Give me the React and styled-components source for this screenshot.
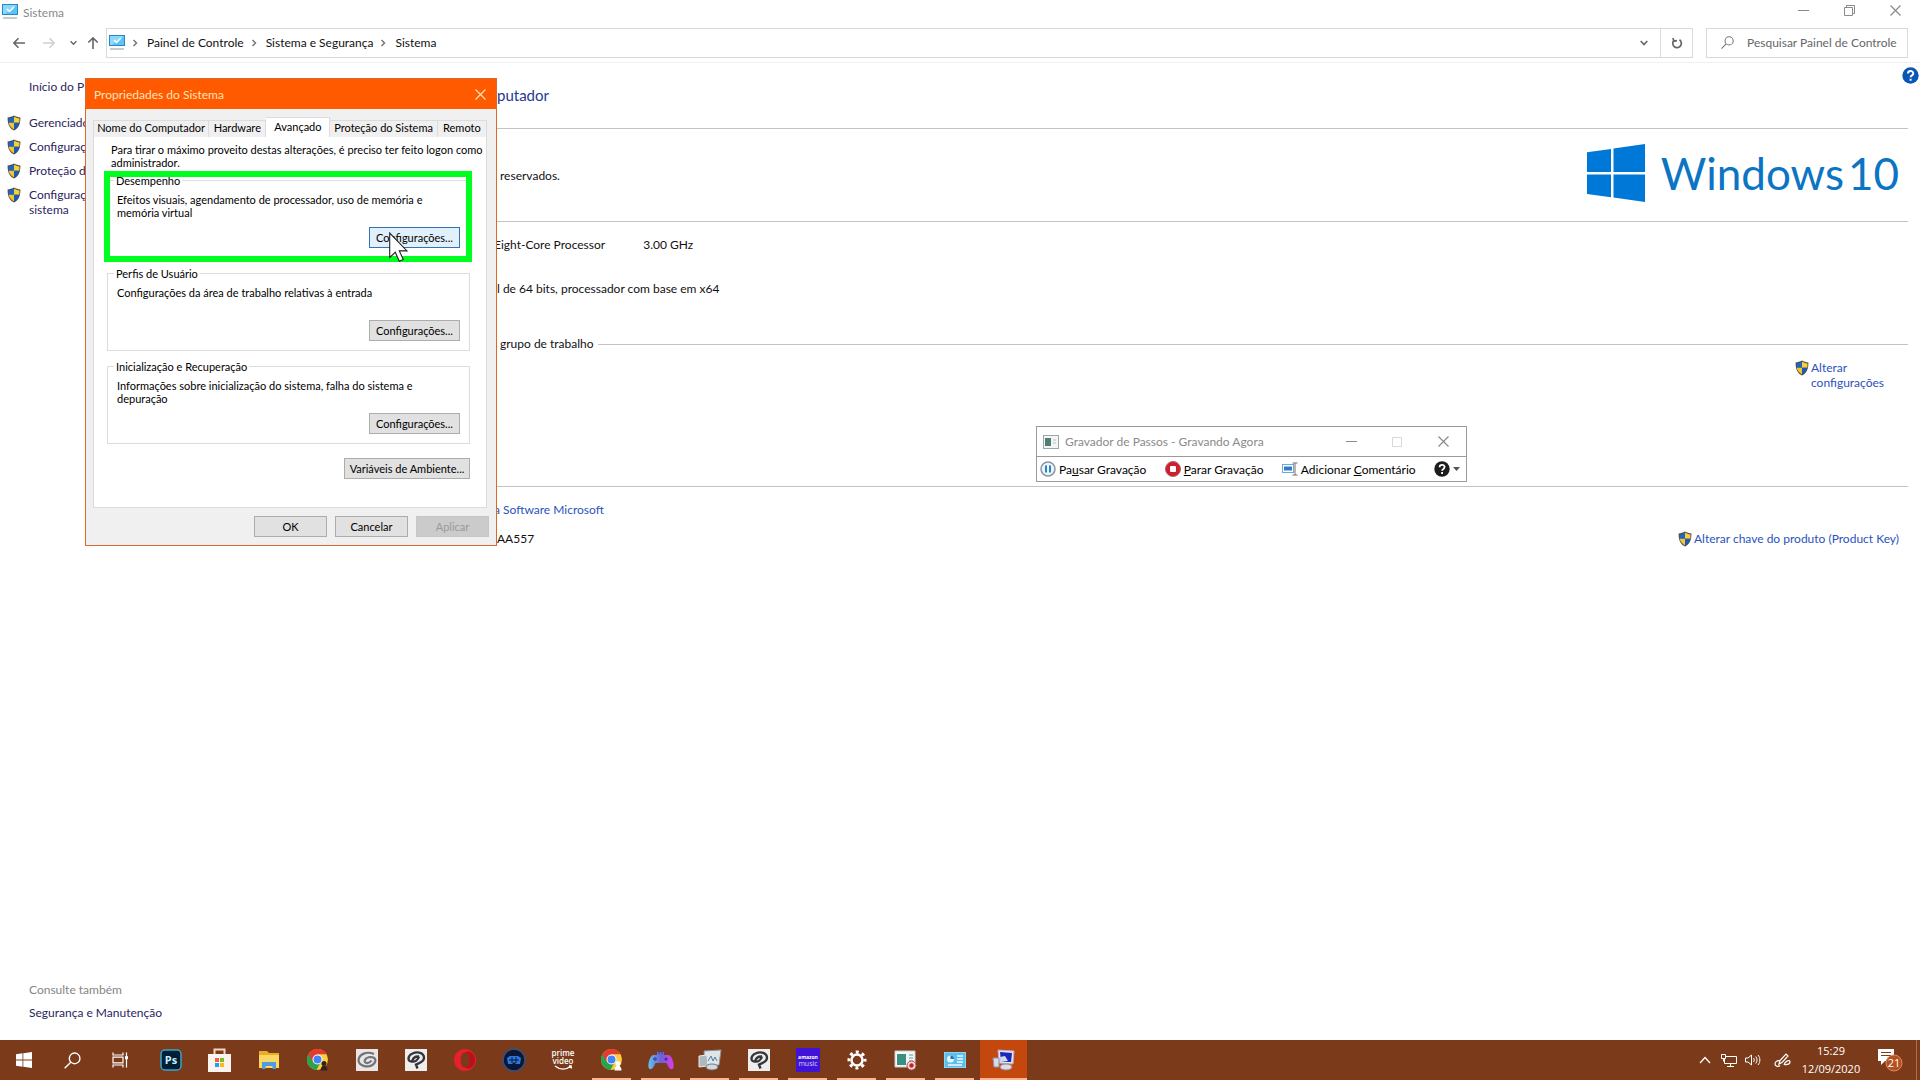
import React from 'react'
import styled, { createGlobalStyle } from 'styled-components'

const GlobalStyle = createGlobalStyle`
    * {
        box-sizing: border-box;
    }
    body {
        margin: 0;
        background: #fff;
        color: #111;
        font-family: Lato, 'Open Sans', sans-serif;
        font-size: 12px;
        line-height: 15px;
    }
    button, input {
        font-family: inherit;
        font-size: inherit;
        line-height: inherit;
        color: inherit;
        margin: 0;
    }
    a {
        color: inherit;
        text-decoration: none;
    }
    svg {
        display: block;
        flex: none;
    }
`

const Screen = styled.div`
    position: relative;
    display: flex;
    flex-direction: column;
    min-height: 100vh;
    overflow: hidden;
`

const PlainButton = styled.button`
    display: flex;
    align-items: center;
    justify-content: center;
    padding: 0;
    border: 0;
    background: none;
`

/* ---- explorer window ---- */

const TitleBar = styled.header`
    display: flex;
    align-items: center;
    justify-content: space-between;
    height: 24px;
    padding: 0 2px 0 2px;
    color: #8a8a8a;
`

const Caption = styled.div`
    display: flex;
    align-items: center;
    gap: 5px;
`

const WindowControls = styled.div`
    display: flex;
    height: 20px;
    align-self: ${props => props.$centered ? 'center' : 'flex-start'};
`

const WindowControl = styled(PlainButton)`
    width: 46px;
    color: ${props => props.$faded ? '#d8d8d8' : '#8a8a8a'};
`

const AddressRow = styled.nav`
    display: flex;
    align-items: center;
    height: 39px;
    padding: 4px 12px 5px 7px;
    border-bottom: 1px solid #f0f0f0;
`

const NavButtons = styled.div`
    display: flex;
    align-items: center;
    color: #666;
`

const NavButton = styled(PlainButton)`
    width: ${props => props.$width}px;
    height: 28px;
`

const AddressBox = styled.div`
    display: flex;
    flex: 1;
    align-items: center;
    height: 30px;
    padding-left: 2px;
    border: 1px solid #d9d9d9;
`

const Crumbs = styled.ol`
    display: flex;
    flex: 1;
    align-items: center;
    margin: 0;
    padding: 0;
    list-style: none;
`

const Crumb = styled.li`
    display: flex;
    align-items: center;
    svg {
        margin: 0 9px 0 7px;
        color: #777;
    }
`

const AddressButton = styled(PlainButton)`
    width: 32px;
    height: 28px;
    color: #666;
    border-left: ${props => props.$divided ? '1px solid #d9d9d9' : '0'};
`

const SearchBox = styled.label`
    display: flex;
    align-items: center;
    gap: 13px;
    width: 202px;
    height: 30px;
    margin-left: 13px;
    padding-left: 14px;
    border: 1px solid #d9d9d9;
    color: #777;
    input {
        flex: 1;
        min-width: 0;
        padding: 0;
        border: 0;
        outline: 0;
        background: none;
    }
    input::placeholder {
        color: #666;
        opacity: 1;
    }
`

const Content = styled.div`
    display: flex;
    flex: 1;
`

const Sidebar = styled.aside`
    display: flex;
    flex-direction: column;
    width: 220px;
    padding: 16px 0 20px 29px;
    color: #2b2560;
`

const HomeLink = styled.a`
    margin-bottom: 21px;
`

const TaskLinks = styled.ul`
    display: flex;
    flex-direction: column;
    gap: 8px;
    margin: 0 0 0 -22px;
    padding: 0;
    list-style: none;
    a {
        display: flex;
        gap: 8px;
    }
`

const SeeAlso = styled.div`
    display: flex;
    flex-direction: column;
    gap: 8px;
    margin-top: auto;
    span {
        color: #858585;
    }
`

const Main = styled.main`
    flex: 1;
    padding: 0 12px 0 277px;
`

const HeadingRow = styled.div`
    display: flex;
    justify-content: space-between;
    align-items: flex-start;
    height: 65px;
    margin-right: -11px;
    padding-top: 4px;
`

const Heading = styled.h1`
    margin: 16px 0 0;
    font-size: 15px;
    font-weight: 400;
    line-height: 24px;
    color: #1f3a93;
`

const Section = styled.section`
    min-height: ${props => props.$height}px;
    border-top: ${props => props.$ruled ? '1px solid #c3c3c3' : '0'};
`

const EditionRow = styled.div`
    display: flex;
    align-items: center;
    justify-content: space-between;
    height: 92px;
    padding: 0 9px 0 3px;
`

const Brand = styled.div`
    display: flex;
    align-items: center;
    gap: 16px;
    padding-bottom: 4px;
    color: #0b74c4;
    font-size: 44px;
    line-height: 60px;
    span + span {
        margin-left: -12px;
    }
`

const InfoList = styled.div`
    display: flex;
    flex-direction: column;
    gap: ${props => props.$gap}px;
    padding-top: 13px;
    line-height: 20px;
`

const InfoRow = styled.div`
    display: flex;
    gap: ${props => props.$gap || 0}px;
    justify-content: ${props => props.$spread ? 'space-between' : 'flex-start'};
    margin-left: ${props => props.$tucked ? '-3px' : '0'};
    padding-right: 9px;
`

const RuledTitle = styled.h2`
    display: flex;
    align-items: center;
    gap: 4px;
    margin: 0 0 6px;
    padding-left: 3px;
    font-size: 12px;
    font-weight: 400;
    line-height: 20px;
    &::after {
        content: '';
        flex: 1;
        height: 1px;
        background: #c3c3c3;
    }
`

const ShieldLink = styled.a`
    display: flex;
    gap: 2px;
    align-items: ${props => props.$top ? 'flex-start' : 'center'};
    width: ${props => props.$top ? '113px' : 'auto'};
    margin-left: auto;
    color: #2a52be;
`

const BlueLink = styled.a`
    color: #2a52be;
`

/* ---- system properties dialog ---- */

const Dialog = styled.section`
    position: absolute;
    left: 85px;
    top: 78px;
    width: 412px;
    border: 1px solid #d96a2a;
    background: #f0f0f0;
    color: #000;
    font-size: 11px;
    line-height: 13px;
`

const DialogTitle = styled.header`
    display: flex;
    align-items: center;
    justify-content: space-between;
    height: 30px;
    padding: 0 10px 0 8px;
    background: #ff5a00;
    color: #ffe3b8;
    font-size: 12px;
`

const Tabs = styled.div`
    display: flex;
    align-items: flex-end;
    height: 28px;
    padding: 0 9px 0 7px;
`

const Tab = styled.button`
    flex: ${props => props.$width} 0 0;
    height: ${props => props.$active ? 20 : 17}px;
    padding: 0 0 3px;
    border: 1px solid #dcdcdc;
    border-bottom: 0;
    border-left-width: ${props => props.$first ? 1 : 0}px;
    background: ${props => props.$active ? '#fff' : '#f0f0f0'};
    line-height: 13px;
    white-space: nowrap;
`

const TabPage = styled.div`
    display: flex;
    flex-direction: column;
    height: 371px;
    margin: 0 9px 0 7px;
    padding: 6px 16px 0 13px;
    border: 1px solid #dcdcdc;
    border-top: 0;
    background: #fff;
`

const Notice = styled.p`
    margin: 0 -16px 5px 4px;
`

const Group = styled.fieldset`
    display: flex;
    flex-direction: column;
    align-items: flex-start;
    height: 84px;
    margin: 0 0 9px;
    padding: 6px 9px 9px 9px;
    border: 1px solid #dcdcdc;
    legend {
        margin-left: -3px;
        padding: 0 2px;
    }
    p {
        min-height: 26px;
        margin: 0 0 8px;
    }
`

const GroupStack = styled.div`
    margin-bottom: 5px;
`

const HighlightFrame = styled.div`
    position: absolute;
    left: 18px;
    top: 92px;
    width: 368px;
    height: 91px;
    border: 6px solid #00ff21;
    pointer-events: none;
`

const PointerMark = styled.div`
    position: absolute;
    left: 303px;
    top: 153px;
    pointer-events: none;
`

const PushButton = styled.button`
    align-self: flex-end;
    width: ${props => props.$width || 73}px;
    height: 21px;
    padding: 0;
    border: 1px solid ${props => props.$hot ? '#2f74b5' : '#adadad'};
    background: ${props => props.$hot ? '#e1f0fb' : '#e1e1e1'};
    white-space: nowrap;
    &:disabled {
        border-color: #c6c6c6;
        background: #cbcbcb;
        color: #9a9a9a;
    }
`

const DialogFooter = styled.footer`
    display: flex;
    justify-content: flex-end;
    gap: 8px;
    padding: 8px 7px 8px;
`

/* ---- steps recorder ---- */

const Recorder = styled.section`
    position: absolute;
    left: 1036px;
    top: 426px;
    width: 431px;
    border: 1px solid #9b9b9b;
    background: #fff;
`

const RecorderTitle = styled.header`
    display: flex;
    align-items: center;
    gap: 6px;
    height: 30px;
    padding-left: 6px;
    border-bottom: 1px solid #9b9b9b;
    color: #8a8a8a;
    div {
        margin-left: auto;
    }
`

const RecorderTools = styled.div`
    display: flex;
    align-items: center;
    justify-content: space-between;
    height: 24px;
    padding: 0 6px 0 3px;
    color: #000;
`

const ToolButton = styled(PlainButton)`
    gap: 3px;
    white-space: nowrap;
`

/* ---- taskbar ---- */

const Taskbar = styled.footer`
    display: flex;
    height: 40px;
    background: #7b3a1a;
    color: #fff;
`

const SystemButton = styled(PlainButton)`
    width: 48px;
    height: 40px;
`

const Apps = styled.div`
    display: flex;
    margin-left: 2px;
`

const AppButton = styled(PlainButton)`
    width: 47px;
    height: 40px;
    margin: 0 1px;
    padding-bottom: 1px;
    background: ${props => props.$active ? '#c4480e' : 'none'};
    box-shadow: ${props => props.$active ? 'inset 0 -2px #ffb592' : 'none'};
    position: relative;
    &::after {
        content: '';
        display: ${props => props.$running ? 'block' : 'none'};
        position: absolute;
        left: 4px;
        right: 4px;
        bottom: 0;
        height: 2px;
        background: #ffb592;
    }
`

const Tray = styled.div`
    display: flex;
    align-items: center;
    margin-left: auto;
    border-right: 1px solid #a7704f;
    margin-right: 3px;
`

const TrayButton = styled(PlainButton)`
    width: ${props => props.$width}px;
    height: 40px;
`

const Clock = styled.time`
    width: 64px;
    font-family: 'Open Sans', 'Noto Sans', sans-serif;
    font-size: 11px;
    line-height: 18px;
    text-align: center;
`

const MonitorIcon = () => (
    <svg width="16" height="16" viewBox="0 0 16 16">
        <rect x="0" y="0" width="16" height="11" fill="#2b86c5" />
        <rect x="1" y="1" width="14" height="9" fill="#5cc3f5" />
        <path d="M1 1h14L3 10H1z" fill="#8bd8fb" />
        <path d="M5 5l2.500 2.500L12 3" fill="none" stroke="#fff" strokeWidth="1.500" />
        <path d="M1 14h14" stroke="#8c9aa3" />
    </svg>
)

const ShieldIcon = () => (
    <svg width="14" height="16" viewBox="0 0 14 16">
        <path d="M7 .5C5 1.700 3 2.300.6 2.500c0 6 1.200 10.200 6.400 13 5.200-2.800 6.400-7 6.400-13C11 2.300 9 1.700 7 .5z" fill="#4b4a45" />
        <path d="M7 1.500v6.300H1.700C1.500 6.400 1.500 5 1.500 3.400 3.500 3.200 5.300 2.600 7 1.500z" fill="#1f66c1" />
        <path d="M7 1.500v6.300h5.300c.2-1.400.2-2.800.2-4.400-2-.2-3.800-.8-5.500-1.900z" fill="#f5cf3c" />
        <path d="M7 7.800v6.600c-3-1.700-4.800-3.700-5.300-6.600z" fill="#f0c636" />
        <path d="M7 7.800v6.600c3-1.700 4.800-3.700 5.300-6.600z" fill="#1c5bb3" />
    </svg>
)

const CloseIcon = ({ size = 11 }) => (
    <svg width={size} height={size} viewBox="0 0 11 11" fill="none" stroke="currentColor" strokeWidth="1.200">
        <path d="M.5.500l10 10M10.500.500l-10 10" />
    </svg>
)

const MinimizeIcon = () => (
    <svg width="11" height="11" viewBox="0 0 11 11" stroke="currentColor">
        <path d="M0 5.500h11" />
    </svg>
)

const RestoreIcon = () => (
    <svg width="11" height="11" viewBox="0 0 11 11" fill="none" stroke="currentColor">
        <path d="M.5 2.500h8v8h-8zM2.500 2.500v-2h8v8h-2" />
    </svg>
)

const ArrowIcon = ({ turn = 0, color = 'currentColor' }) => (
    <svg width="12" height="12" viewBox="0 0 12 12" fill="none" stroke={color} strokeWidth="1.600">
        <path transform={`rotate(${turn} 6 6)`} d="M12 6H1M5.500 1.300L.9 6l4.600 4.700" />
    </svg>
)

const ChevronDown = ({ width = 8 }) => (
    <svg width={width} height="6" viewBox="0 0 8 6" fill="none" stroke="currentColor" strokeWidth="1.600">
        <path d="M.7 1L4 4.500 7.300 1" />
    </svg>
)

const ChevronRight = () => (
    <svg width="6" height="8" viewBox="0 0 6 8" fill="none" stroke="currentColor" strokeWidth="1.500">
        <path d="M1.500 1l3 3-3 3" />
    </svg>
)

const SearchIcon = ({ size = 13, color = 'currentColor' }) => (
    <svg width={size} height={size} viewBox="0 0 16 16" fill="none" stroke={color} strokeWidth="1.300">
        <circle cx="10" cy="6" r="5" />
        <path d="M6.400 9.600L.6 15.400" />
    </svg>
)

const WindowsFlag = () => (
    <svg width="58" height="58" viewBox="0 0 58 58" fill="#0078d7">
        <path d="M0 8.200L24 5v23H0zM26.500 4.600L58 0v28H26.500zM0 30.500h24v22.700L0 50zM26.500 30.500H58V58l-31.500-4.500z" />
    </svg>
)

const StartIcon = () => (
    <svg width="16" height="16" viewBox="0 0 16 16" fill="#fff">
        <path d="M0 2.200l6.500-.9v6.300H0zM7.300 1.200L16 0v7.600H7.300zM0 8.400h6.500v6.300L0 13.800zM7.300 8.400H16V16l-8.700-1.200z" />
    </svg>
)

const TaskViewIcon = () => (
    <svg width="17" height="16" viewBox="0 0 17 16" fill="none" stroke="#fff" strokeWidth="1.200">
        <path d="M1 .500v2.500h10V.500M1 15.500V13h10v2.500M1 5.200h10v5.600H1zM14.500.500v15" />
        <path d="M13 4.200h3v3h-3z" fill="#fff" stroke="none" />
    </svg>
)

const PhotoshopIcon = () => (
    <svg width="22" height="22" viewBox="0 0 22 22">
        <rect x="1" y="1" width="20" height="20" rx="4" fill="#001e36" stroke="#37a7c9" strokeWidth="1.500" />
        <text x="11" y="15" textAnchor="middle" fontFamily="Open Sans" fontSize="11" fontWeight="700" fill="#c9f0ff">Ps</text>
    </svg>
)

const StoreIcon = () => (
    <svg width="23" height="24" viewBox="0 0 23 24">
        <path d="M6.500 6V1.500h10V6" fill="none" stroke="#f7d6c6" strokeWidth="2" />
        <path d="M0 6h23v18H0z" fill="#fbf3ee" />
        <path d="M7 10h4v4H7z" fill="#f0603a" />
        <path d="M12 10h4v4h-4z" fill="#7fba2a" />
        <path d="M7 15h4v4H7z" fill="#1da1f2" />
        <path d="M12 15h4v4h-4z" fill="#fbb913" />
    </svg>
)

const FolderIcon = () => (
    <svg width="22" height="20" viewBox="0 0 22 20">
        <path d="M1 1h8l2 2h10v15H1z" fill="#e9ad27" />
        <path d="M1 5h20v13H1z" fill="#fcd765" />
        <path d="M4 19v-7h14v7h-3.500v-3h-7v3z" fill="#4a9de0" />
    </svg>
)

const ChromeIcon = ({ badge }) => (
    <svg width="24" height="24" viewBox="0 0 24 24">
        <circle cx="11.500" cy="11.500" r="10.500" fill="#ffcd40" />
        <path d="M2.400 6.200a10.500 10.500 0 0 0 8.200 15.800l4.400-8.500-3.500-2z" fill="#2ba24c" />
        <path d="M11.500 6.200h9.100A10.500 10.500 0 0 0 2.400 6.200l4.600 8z" fill="#e33b2e" />
        <circle cx="11.500" cy="11.500" r="5" fill="#fff" />
        <circle cx="11.500" cy="11.500" r="4" fill="#4285f4" />
        <circle cx="18" cy="15.500" r="2.500" fill={badge} />
        <path d="M14.500 22.500c0-3 1.500-5 3.500-5s3.500 2 3.500 5z" fill={badge} />
    </svg>
)

const SwirlIcon = () => (
    <svg width="22" height="22" viewBox="0 0 22 22">
        <rect width="22" height="22" fill="#e9e6e4" />
        <path d="M18 5C11 2 3 5 2.500 11c0 6 9 8 14 5 5-4 3-8-2-8-5 .2-8 5-4 6 2 .3 4-1 5-2.500" fill="none" stroke="#6f7579" strokeWidth="2.200" />
    </svg>
)

const ClipIcon = () => (
    <svg width="22" height="22" viewBox="0 0 22 22">
        <rect width="22" height="22" fill="#f0eeec" />
        <path d="M14 7.500C10 7 8 9 7 12.500 2 13 2.500 6.500 7.500 4.500 13 2 19 4 19 9c0 4-4 4.500-8 6.500l1.500 4M7 12.500c3 .5 6-1.500 7-5" fill="none" stroke="#33373c" strokeWidth="2.400" />
    </svg>
)

const OperaIcon = () => (
    <svg width="22" height="22" viewBox="0 0 22 22">
        <path fillRule="evenodd" d="M11 0a11 11 0 1 0 0 22 11 11 0 0 0 0-22zm0 3.500c2.700 0 4.300 3.400 4.300 7.500s-1.600 7.500-4.300 7.500S6.700 15.100 6.700 11 8.300 3.500 11 3.500z" fill="#e8202b" />
        <path d="M11 3.500C14 1 21 3 21 11s-7 10-10 7.500c2.700 0 4.300-3.400 4.300-7.500S13.700 3.500 11 3.500z" fill="#b5121c" />
    </svg>
)

const SphereIcon = () => (
    <svg width="24" height="24" viewBox="0 0 24 24">
        <circle cx="12" cy="12" r="11" fill="#0b1736" stroke="#38507e" strokeWidth="1.500" />
        <path d="M5 10l3-2h8l3 2-1 6h-4l-2-2-2 2H6z" fill="#2d78e0" />
        <path d="M7 12h10M10 9v6M14 9v6" stroke="#0b1736" />
    </svg>
)

const PrimeIcon = () => (
    <svg width="24" height="24" viewBox="0 0 24 24" fill="#fff">
        <text x="12" y="8" textAnchor="middle" fontFamily="Open Sans" fontSize="8" fontWeight="600">prime</text>
        <text x="12" y="16" textAnchor="middle" fontFamily="Open Sans" fontSize="8" fontWeight="600">video</text>
        <path d="M4 18c5 4 11 4 16 0l.5 2.500M20 18l-2 0" fill="none" stroke="#fff" strokeWidth="1.300" />
    </svg>
)

const GamepadIcon = () => (
    <svg width="26" height="22" viewBox="0 0 26 22">
        <defs>
            <linearGradient id="pad">
                <stop offset="0" stopColor="#5fc4ef" />
                <stop offset=".5" stopColor="#6d5fd8" />
                <stop offset="1" stopColor="#e23bea" />
            </linearGradient>
        </defs>
        <path d="M5 6h4V3h7v3h5c3 1 5 8 4.500 12-.5 3-3 3-5 0l-2-4h-11l-2 4c-2 3-4.500 3-5 0C0 14 2 7 5 6z" fill="url(#pad)" />
        <path d="M7 8v4M5 10h4M11 2v3M14 2v3" stroke="#3b4aa0" strokeWidth="1.300" />
        <circle cx="18" cy="10" r="1.500" fill="#402a90" />
    </svg>
)

const MonitorToolIcon = () => (
    <svg width="24" height="22" viewBox="0 0 24 22">
        <path d="M6 2l17-1-2 15-14 1z" fill="#dfe5e8" stroke="#8d979b" />
        <path d="M1 7l8-1 1 11-9 1z" fill="#aeb8bd" stroke="#e8ecee" />
        <path d="M10 12l3-5 2 5 2-4 2 4" fill="none" stroke="#4b7ea8" />
        <ellipse cx="14" cy="18" rx="6" ry="3" fill="#d4d8da" stroke="#6c777c" />
    </svg>
)

const MusicIcon = () => (
    <svg width="24" height="24" viewBox="0 0 24 24">
        <rect width="24" height="24" fill="#4014d6" />
        <text x="12" y="11" textAnchor="middle" fontFamily="Open Sans" fontSize="5" fontWeight="700" fill="#fff">amazon</text>
        <text x="12" y="18" textAnchor="middle" fontFamily="Open Sans" fontSize="7" fill="#d9ccff">music</text>
    </svg>
)

const GearIcon = () => (
    <svg width="20" height="20" viewBox="0 0 20 20" fill="none" stroke="#fff">
        <circle cx="10" cy="10" r="5.500" strokeWidth="2.500" />
        <circle cx="10" cy="10" r="8" strokeWidth="3" strokeDasharray="3 3.283" strokeDashoffset="1.500" />
    </svg>
)

const StepsIcon = () => (
    <svg width="23" height="22" viewBox="0 0 23 22">
        <path d="M1 2h20v16H1z" fill="#f6f6f4" stroke="#c9cfcd" />
        <path d="M3 5h9v11H3z" fill="#3a8f80" />
        <path d="M15 6h4M15 9h4M15 12h4" stroke="#8bb" strokeWidth="1.500" />
        <circle cx="17.500" cy="16.500" r="4.500" fill="#f5dada" stroke="#a85050" />
        <circle cx="17.500" cy="16.500" r="2.200" fill="#c8202c" />
    </svg>
)

const PanelIcon = () => (
    <svg width="22" height="16" viewBox="0 0 22 16">
        <rect width="22" height="16" fill="#5cc0ee" stroke="#b9e6fa" />
        <circle cx="6.500" cy="7" r="3.500" fill="#e9f7fd" />
        <path d="M6.500 7V3.500A3.500 3.500 0 0 1 10 7z" fill="#2372b2" />
        <path d="M13 4h6M13 7h6M13 10h6M4 13h14" stroke="#eef9ff" strokeWidth="1.500" />
    </svg>
)

const SystemIcon = () => (
    <svg width="24" height="22" viewBox="0 0 24 22">
        <path d="M6 1l16 1-1 13-14-1z" fill="#e7e4ee" stroke="#b3b0c4" />
        <path d="M8 3l12 1-1 9H9z" fill="#1b27b8" />
        <path d="M8 8l5-1 3 5-7 1z" fill="#d5d6ee" />
        <path d="M1 9h6v9H2z" fill="#d8dce6" stroke="#8e94aa" />
        <ellipse cx="14" cy="18" rx="6" ry="3" fill="#dcdce4" stroke="#8f8f9c" />
    </svg>
)

const HelpGlyph = ({ size, fill }) => (
    <svg width={size} height={size} viewBox="0 0 16 16">
        <circle cx="8" cy="8" r="7.700" fill={fill} />
        <path d="M5.600 6.200c0-3.200 5-3.100 5-.1 0 1.800-2.500 1.800-2.500 3.600M8.100 11v1.900" fill="none" stroke="#fff" strokeWidth="1.800" />
    </svg>
)

const PauseIcon = () => (
    <svg width="16" height="16" viewBox="0 0 16 16">
        <circle cx="8" cy="8" r="7" fill="#eaf4fa" stroke="#8896a3" strokeWidth="1.500" />
        <path d="M6 4.500v7M10 4.500v7" stroke="#2f83c2" strokeWidth="2" />
    </svg>
)

const StopIcon = () => (
    <svg width="16" height="16" viewBox="0 0 16 16">
        <circle cx="8" cy="8" r="7.500" fill="#cf1f2c" stroke="#b5606a" />
        <rect x="5" y="5" width="6" height="6" rx="1" fill="#fff" />
    </svg>
)

const CommentIcon = () => (
    <svg width="16" height="14" viewBox="0 0 16 14">
        <rect x=".5" y="2.500" width="11" height="8" fill="#fff" stroke="#6fa7d6" />
        <rect x="2" y="4.500" width="8" height="4" fill="#2d7dc8" />
        <path d="M10.500 1h5M13 1v12M10.500 13h5" stroke="#866" fill="none" />
    </svg>
)

const RecorderIcon = () => (
    <svg width="16" height="14" viewBox="0 0 16 14">
        <rect x=".5" y=".5" width="15" height="13" fill="#f5f5f5" stroke="#9aa" />
        <rect x="2" y="3" width="6" height="8" fill="#4d8073" />
        <path d="M10 5h3M10 8h3" stroke="#bbb" />
    </svg>
)

const CursorIcon = () => (
    <svg width="19" height="30" viewBox="0 0 19 30">
        <path d="M.7 1v24.500l5.600-5.200 4 9 4-1.800-4-8.600h7.700z" fill="#fff" stroke="#222" strokeWidth="1.100" />
    </svg>
)

const taskLinks = [
    'Gerenciado',
    'Configuraç',
    'Proteção d',
    'Configuraç\nsistema'
]

const TaskText = styled.span`
    white-space: pre-line;
`

const tabs = [
    { label: 'Nome do Computador', width: 116 },
    { label: 'Hardware', width: 57 },
    { label: 'Avançado', width: 64, active: true },
    { label: 'Proteção do Sistema', width: 108 },
    { label: 'Remoto', width: 49 }
]

const groups = [
    {
        title: 'Desempenho',
        text: 'Efeitos visuais, agendamento de processador, uso de memória e memória virtual',
        hot: true
    },
    {
        title: 'Perfis de Usuário',
        text: 'Configurações da área de trabalho relativas à entrada'
    },
    {
        title: 'Inicialização e Recuperação',
        text: 'Informações sobre inicialização do sistema, falha do sistema e depuração'
    }
]

const apps = [
    { name: 'Photoshop', icon: <PhotoshopIcon /> },
    { name: 'Store', icon: <StoreIcon /> },
    { name: 'Explorer', icon: <FolderIcon /> },
    { name: 'Chrome', icon: <ChromeIcon badge="#33221c" /> },
    { name: 'Clip Studio', icon: <SwirlIcon /> },
    { name: 'Clip Studio Paint', icon: <ClipIcon /> },
    { name: 'Opera', icon: <OperaIcon /> },
    { name: 'Sphere', icon: <SphereIcon /> },
    { name: 'Prime Video', icon: <PrimeIcon /> },
    { name: 'Chrome 2', icon: <ChromeIcon badge="#fff" />, running: true },
    { name: 'Gamepad', icon: <GamepadIcon />, running: true },
    { name: 'Monitor', icon: <MonitorToolIcon />, running: true },
    { name: 'Paint', icon: <ClipIcon />, running: true },
    { name: 'Amazon Music', icon: <MusicIcon />, running: true },
    { name: 'Settings', icon: <GearIcon />, running: true },
    { name: 'Steps', icon: <StepsIcon />, running: true },
    { name: 'Control Panel', icon: <PanelIcon />, running: true },
    { name: 'System', icon: <SystemIcon />, active: true }
]

function Explorer() {
    return (
        <>
            <TitleBar>
                <Caption><MonitorIcon />Sistema</Caption>
                <WindowControls>
                    <WindowControl aria-label="Minimizar"><MinimizeIcon /></WindowControl>
                    <WindowControl aria-label="Restaurar"><RestoreIcon /></WindowControl>
                    <WindowControl aria-label="Fechar"><CloseIcon /></WindowControl>
                </WindowControls>
            </TitleBar>
            <AddressRow>
                <NavButtons>
                    <NavButton $width={24} aria-label="Voltar"><ArrowIcon /></NavButton>
                    <NavButton $width={36} aria-label="Avançar"><ArrowIcon turn={180} color="#d0d0d0" /></NavButton>
                    <NavButton $width={12} aria-label="Recentes"><ChevronDown width={7} /></NavButton>
                    <NavButton $width={27} aria-label="Acima"><ArrowIcon turn={90} /></NavButton>
                </NavButtons>
                <AddressBox>
                    <MonitorIcon />
                    <Crumbs>
                        {['Painel de Controle', 'Sistema e Segurança', 'Sistema'].map(name => (
                            <Crumb key={name}><ChevronRight /><a href="#crumb">{name}</a></Crumb>
                        ))}
                    </Crumbs>
                    <AddressButton aria-label="Locais anteriores"><ChevronDown width={10} /></AddressButton>
                    <AddressButton $divided aria-label="Atualizar">
                        <svg width="12" height="12" viewBox="0 0 12 12" fill="none" stroke="currentColor" strokeWidth="1.700">
                            <path d="M8.500 2.800A4.300 4.300 0 1 1 3.300 3M2 1l.8 3.200L6 3.600" />
                        </svg>
                    </AddressButton>
                </AddressBox>
                <SearchBox>
                    <SearchIcon />
                    <input type="text" placeholder="Pesquisar Painel de Controle" aria-label="Pesquisar Painel de Controle" />
                </SearchBox>
            </AddressRow>
            <Content>
                <Sidebar>
                    <HomeLink href="#home">Início do P</HomeLink>
                    <TaskLinks>
                        {taskLinks.map((text, i) => (
                            <li key={i}>
                                <a href="#task"><ShieldIcon /><TaskText>{text}</TaskText></a>
                            </li>
                        ))}
                    </TaskLinks>
                    <SeeAlso>
                        <span>Consulte também</span>
                        <a href="#security">Segurança e Manutenção</a>
                    </SeeAlso>
                </Sidebar>
                <Main>
                    <HeadingRow>
                        <Heading>putador</Heading>
                        <PlainButton aria-label="Ajuda"><HelpGlyph size={17} fill="#0a56b5" /></PlainButton>
                    </HeadingRow>
                    <Section $ruled $height={93}>
                        <EditionRow>
                            reservados.
                            <Brand><WindowsFlag /><span>Windows</span><span>10</span></Brand>
                        </EditionRow>
                    </Section>
                    <Section $ruled $height={113}>
                        <InfoList $gap={24}>
                            <InfoRow $gap={38} $tucked><span>Eight-Core Processor</span><span>3.00 GHz</span></InfoRow>
                            <InfoRow>l de 64 bits, processador com base em x64</InfoRow>
                        </InfoList>
                    </Section>
                    <Section $height={152}>
                        <RuledTitle>grupo de trabalho</RuledTitle>
                        <ShieldLink href="#settings" $top><ShieldIcon /><span>Alterar configurações</span></ShieldLink>
                    </Section>
                    <Section $ruled $height={90}>
                        <InfoList $gap={9}>
                            <InfoRow $tucked><BlueLink href="#license">a Software Microsoft</BlueLink></InfoRow>
                            <InfoRow $spread>
                                AA557
                                <ShieldLink href="#key"><ShieldIcon />Alterar chave do produto (Product Key)</ShieldLink>
                            </InfoRow>
                        </InfoList>
                    </Section>
                </Main>
            </Content>
        </>
    )
}

function PropertiesDialog() {
    return (
        <Dialog role="dialog" aria-label="Propriedades do Sistema">
            <DialogTitle>
                Propriedades do Sistema
                <PlainButton aria-label="Fechar"><CloseIcon /></PlainButton>
            </DialogTitle>
            <Tabs role="tablist">
                {tabs.map((tab, i) => (
                    <Tab key={tab.label} role="tab" aria-selected={!!tab.active} $active={tab.active} $width={tab.width} $first={i === 0}>
                        {tab.label}
                    </Tab>
                ))}
            </Tabs>
            <TabPage>
                <Notice>Para tirar o máximo proveito destas alterações, é preciso ter feito logon como administrador.</Notice>
                <GroupStack>
                    {groups.map(group => (
                        <Group key={group.title}>
                            <legend>{group.title}</legend>
                            <p>{group.text}</p>
                            <PushButton $width={91} $hot={group.hot}>Configurações...</PushButton>
                        </Group>
                    ))}
                </GroupStack>
                <PushButton $width={126}>Variáveis de Ambiente...</PushButton>
            </TabPage>
            <DialogFooter>
                <PushButton>OK</PushButton>
                <PushButton>Cancelar</PushButton>
                <PushButton disabled>Aplicar</PushButton>
            </DialogFooter>
            <HighlightFrame />
            <PointerMark><CursorIcon /></PointerMark>
        </Dialog>
    )
}

function StepsRecorder() {
    return (
        <Recorder>
            <RecorderTitle>
                <RecorderIcon />
                Gravador de Passos - Gravando Agora
                <WindowControls $centered>
                    <WindowControl aria-label="Minimizar"><MinimizeIcon /></WindowControl>
                    <WindowControl $faded disabled aria-label="Maximizar">
                        <svg width="10" height="10" viewBox="0 0 10 10" fill="none" stroke="currentColor">
                            <path d="M.5.500h9v9h-9z" />
                        </svg>
                    </WindowControl>
                    <WindowControl aria-label="Fechar"><CloseIcon /></WindowControl>
                </WindowControls>
            </RecorderTitle>
            <RecorderTools>
                <ToolButton><PauseIcon /><span>Pa<u>u</u>sar Gravação</span></ToolButton>
                <ToolButton><StopIcon /><span><u>P</u>arar Gravação</span></ToolButton>
                <ToolButton><CommentIcon /><span>Adicionar <u>C</u>omentário</span></ToolButton>
                <ToolButton aria-label="Ajuda">
                    <HelpGlyph size={16} fill="#1c1c1c" />
                    <svg width="7" height="4" viewBox="0 0 7 4"><path d="M0 0h7L3.500 4z" fill="#555" /></svg>
                </ToolButton>
            </RecorderTools>
        </Recorder>
    )
}

function TaskbarRow() {
    return (
        <Taskbar>
            <SystemButton aria-label="Iniciar"><StartIcon /></SystemButton>
            <SystemButton aria-label="Pesquisar"><SearchIcon size={17} color="#fff" /></SystemButton>
            <SystemButton aria-label="Visão de tarefas"><TaskViewIcon /></SystemButton>
            <Apps>
                {apps.map(app => (
                    <AppButton key={app.name} aria-label={app.name} $running={app.running} $active={app.active}>
                        {app.icon}
                    </AppButton>
                ))}
            </Apps>
            <Tray>
                <TrayButton $width={24} aria-label="Ícones ocultos">
                    <svg width="12" height="8" viewBox="0 0 12 8" fill="none" stroke="#fff" strokeWidth="1.300">
                        <path d="M1 7l5-5.500L11 7" />
                    </svg>
                </TrayButton>
                <TrayButton $width={24} aria-label="Rede">
                    <svg width="16" height="14" viewBox="0 0 16 14" fill="none" stroke="#fff">
                        <path d="M5 3.500h10.500v7H3.500V6M9.500 10.500v3M6 13.500h7M.5 1.500h4v4h-4zM2.500 5.500v3" />
                    </svg>
                </TrayButton>
                <TrayButton $width={24} aria-label="Volume">
                    <svg width="16" height="14" viewBox="0 0 16 14" fill="none" stroke="#fff">
                        <path d="M.5 5v4h2.500L6.500 12V2L3 5zM8.500 5c1 1.200 1 2.800 0 4M10.700 3.500c1.800 2 1.800 5 0 7M13 2c2.500 3 2.500 7 0 10" />
                    </svg>
                </TrayButton>
                <TrayButton $width={34} aria-label="Windows Ink">
                    <svg width="17" height="15" viewBox="0 0 17 15" fill="none" stroke="#fff" strokeWidth="1.200">
                        <path d="M5 11l1-3.500L12 1l2 2-6 6.500zM6 8c-3-1-5 1-5 3s3 3.500 5 1.500M10 12c1-4 6-6 6-3s-3 2-5 3" />
                    </svg>
                </TrayButton>
                <Clock>15:29<br />12/09/2020</Clock>
                <TrayButton $width={53} aria-label="Notificações">
                    <svg width="26" height="24" viewBox="0 0 26 24">
                        <path d="M1 1h16v12H8l-4 4v-4H1z" fill="#fff" />
                        <path d="M4 4.500h10M4 7.500h10" stroke="#7b3a1a" />
                        <circle cx="17" cy="15" r="8" fill="#b5501f" stroke="#e08a60" />
                        <text x="17" y="19" textAnchor="middle" fontFamily="Open Sans" fontSize="11" fill="#fff">21</text>
                    </svg>
                </TrayButton>
            </Tray>
        </Taskbar>
    )
}

function App() {
    return (
        <Screen>
            <GlobalStyle />
            <Explorer />
            <TaskbarRow />
            <PropertiesDialog />
            <StepsRecorder />
        </Screen>
    )
}

export default App
